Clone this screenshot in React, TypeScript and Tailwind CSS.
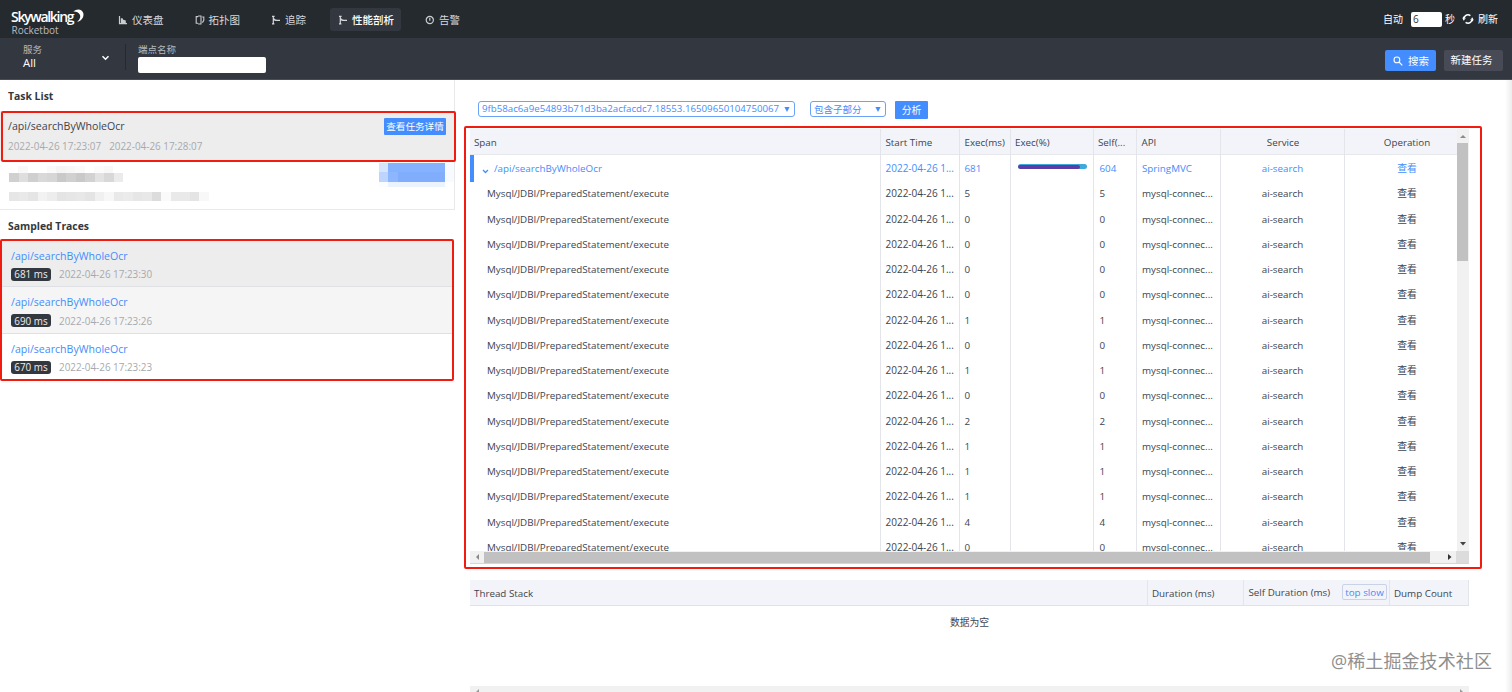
import React from "react";

const Crescent = () => (
  <svg className="absolute left-[61px] top-[-1px] h-[17px] w-[14px]" viewBox="0 0 14 18">
    <path d="M1 2.6C4.6 -0.8 10.6 -0.2 11.6 4.6C12.4 9 9.4 12.6 5 13.6C8 11.2 9 8.4 7.8 5.8C6.6 3.2 4 2.4 1 2.6Z" fill="#fff" />
  </svg>
);

const ChartIcon = () => (
  <svg className="h-[10px] w-[10px]" viewBox="0 0 10 10">
    <path d="M1.5 1V8.6H9" fill="none" stroke="#c9ccd0" strokeWidth="1.2" />
    <path d="M2.8 8V3.2H4.6L5.2 4.8L7.8 5.4V8Z" fill="#c9ccd0" />
  </svg>
);
const TopoIcon = () => (
  <svg className="h-[10px] w-[10px]" viewBox="0 0 10 10" fill="none" stroke="#c9ccd0" strokeWidth="1.1">
    <path d="M3.2 1.6H1.2V8.2H3.2M3.2 1H6V9H3.2" />
    <path d="M7.2 2H8.8V5.4L7.4 7.6" />
  </svg>
);
const BranchIcon = () => (
  <svg className="h-[10px] w-[10px]" viewBox="0 0 10 10" fill="none" stroke="#d4d6da" strokeWidth="1.2">
    <path d="M1 1.3H3.6M2.3 1.3V9M1 8.9H3.4M2.4 3.2C3 5 4.4 5.4 6 5.4M6 5.4H9" />
  </svg>
);
const AlarmIcon = () => (
  <svg className="h-[10px] w-[10px]" viewBox="0 0 10 10" fill="none" stroke="#c9ccd0" strokeWidth="1.2">
    <circle cx="4.8" cy="5" r="3.6" />
    <path d="M4.8 2.8V5.8" />
  </svg>
);
const RefreshIcon = () => (
  <svg className="h-[12px] w-[12px]" viewBox="0 0 12 12">
    <path d="M2 7.2A4.1 4.1 0 0 1 8.4 2.7M10 4.8A4.1 4.1 0 0 1 3.6 9.3" fill="none" stroke="#fff" strokeWidth="1.5" />
    <path d="M0 5.6H4L2 3.2ZM8 6.4H12L10 8.8Z" fill="#fff" />
  </svg>
);
const SearchIcon = () => (
  <svg className="h-[10px] w-[10px]" viewBox="0 0 10 10" fill="none" stroke="#fff" strokeWidth="1.1">
    <circle cx="3.9" cy="3.9" r="2.9" />
    <path d="M6 6L9.3 9.3" />
  </svg>
);
const Chevron = ({ className }: { className: string }) => (
  <svg className={className} viewBox="0 0 8 6" fill="none" stroke="currentColor" strokeWidth="1.5">
    <path d="M1 1.2L4 4.2L7 1.2" />
  </svg>
);

const nav = [
  { label: "仪表盘", icon: <ChartIcon />, cls: "w-[76.5px]" },
  { label: "拓扑图", icon: <TopoIcon />, cls: "w-[76.5px]" },
  { label: "追踪", icon: <BranchIcon />, cls: "w-[68px]" },
  { label: "性能剖析", icon: <BranchIcon />, cls: "w-[71px] ml-[-9px] mr-[24px] bg-[#333840] pl-[8px] text-white font-medium" },
  { label: "告警", icon: <AlarmIcon />, cls: "w-[60px]" },
];

const Header = () => (
  <header className="flex h-[38px] items-center bg-[#252a2f] text-[10.5px] text-[#d5d7da]">
    <div className="relative ml-[11px] mt-[10px] h-[28px] w-[107px]">
      <div className="h-[14px] text-[14px] leading-[14px] font-semibold tracking-[-1.3px] text-white">Skywalking</div>
      <Crescent />
      <div className="mt-[-1px] ml-[0.5px] text-[10px] leading-[14px] text-[#b9bcc0]">Rocketbot</div>
    </div>
    <nav className="mt-[1px] flex items-center">
      {nav.map((n, i) => (
        <a key={i} className={`flex h-[23px] items-center gap-[4px] rounded-[3px] whitespace-nowrap ${n.cls}`}>
          {n.icon}
          <span className="mt-[2px]">{n.label}</span>
        </a>
      ))}
    </nav>
    <div className="ml-auto mr-[14px] flex items-center whitespace-nowrap text-[10px] text-white">
      <span className="w-[28px] pt-[1px]">自动</span>
      <span className="flex h-[15px] w-[31px] items-center rounded-[2px] bg-white pl-[2px] text-[10px] text-[#333]">6</span>
      <span className="ml-[3px] w-[17px]">秒</span>
      <RefreshIcon />
      <span className="ml-[4px] pt-[1px]">刷新</span>
    </div>
  </header>
);

const Toolbar = () => (
  <div className="flex h-[42px] border-b border-[#4a4e54] bg-[#333840] text-[10px] text-[#b5b8bd]">
    <div className="mt-[6px] flex h-[26px] w-[126px] border-r border-[#252a2f] pl-[23px]">
      <div className="w-[78px]">
        <div className="h-[12px] text-[9.5px] leading-[12px]">服务</div>
        <div className="text-[11.3px] leading-[13px] text-white">All</div>
      </div>
      <Chevron className="mt-[11px] h-[6px] w-[9px] text-white" />
    </div>
    <div className="ml-[12px] mt-[5px]">
      <div className="h-[14px] text-[9.5px] leading-[14px]">端点名称</div>
      <div className="h-[16px] w-[128px] rounded-[2px] bg-white" />
    </div>
    <div className="ml-auto mr-[9px] mt-[12px] flex h-[21px] gap-[8px] whitespace-nowrap text-[10.5px] text-white">
      <button className="flex w-[51px] items-center rounded-[2px] bg-[#448dfe] pl-[8px]">
        <SearchIcon />
        <span className="ml-[5px] pt-[2px]">搜索</span>
      </button>
      <button className="w-[59px] rounded-[2px] bg-[#484b55] pt-[1px] pr-[4px] text-center">新建任务</button>
    </div>
  </div>
);

const traces = [
  { ms: "681 ms", t: "2022-04-26 17:23:30", bg: "bg-[#ededed]" },
  { ms: "690 ms", t: "2022-04-26 17:23:26", bg: "bg-[#f5f5f5]" },
  { ms: "670 ms", t: "2022-04-26 17:23:23", bg: "bg-white" },
];

const Mosaic = ({ cells, className }: { cells: string[]; className: string }) => (
  <div className={`flex ${className}`}>
    {cells.map((c, i) => (
      <div key={i} className={`h-full w-[9.5px] ${c}`} />
    ))}
  </div>
);

const LeftPanel = () => (
  <aside className="w-[455px] shrink-0">
    <div className="relative h-[129.5px] border-r border-b border-[#e9e9ec]">
      <h2 className="h-[31px] pl-[8px] text-[10.4px] leading-[32px] font-bold text-[#333840]">Task List</h2>
      <div className="flex h-[50px] justify-between bg-[#ededed] pl-[8px] pr-[8px]">
        <div>
          <div className="mt-[7px] text-[10.6px] leading-[16px] text-[#3d444f]">/api/searchByWholeOcr</div>
          <div className="mt-[5px] flex gap-[8px] text-[9.9px] leading-[15px] text-[#a7a9ae]">
            <span>2022-04-26 17:23:07</span>
            <span>2022-04-26 17:28:07</span>
          </div>
        </div>
        <span className="mt-[7px] flex h-[17px] w-[62px] items-center justify-center rounded-[1px] bg-[#448dfe] pt-[2px] text-[9.6px] whitespace-nowrap text-white">查看任务详情</span>
      </div>
      <div className="flex h-[47px] justify-between pl-[9px]">
        <div>
          <Mosaic className="mt-[5px] h-[7px] pl-[9px]" cells={["bg-[#f8f8f8]", "bg-white", "bg-white", "bg-[#fafafa]", "bg-[#f5f5f5]", "bg-[#f7f7f7]", "bg-[#fafafa]", "bg-white", "bg-[#fbfbfb]", "bg-[#f8f8f8]"]} />
          <Mosaic className="h-[9px]" cells={["bg-[#d0d0d0]", "bg-[#dedede]", "bg-[#cfcfcf]", "bg-[#d9d9d9]", "bg-[#d6d6d6]", "bg-[#c9c9c9]", "bg-[#d0d0d0]", "bg-[#c9c9c9]", "bg-[#d2d2d2]", "bg-[#e2e2e2]", "bg-[#d8d8d8]", "bg-[#ebebeb]"]} />
          <Mosaic className="mt-[10px] h-[9px]" cells={["bg-[#e6e6e6]", "bg-[#e9e9e9]", "bg-[#e5e5e5]", "bg-[#f2f2f2]", "bg-[#ededed]", "bg-[#e4e4e4]", "bg-[#e6e6e6]", "bg-[#e8e8e8]", "bg-[#e4e4e4]", "bg-[#f0f0f0]", "bg-[#f7f7f7]", "bg-[#e9e9e9]", "bg-[#ebebeb]", "bg-[#e6e6e6]", "bg-[#e8e8e8]", "bg-[#dcdcdc]", "bg-[#fafafa]", "bg-[#e9e9e9]", "bg-[#e9e9e9]", "bg-[#e4e4e4]", "bg-[#f8f8f8]"]} />
        </div>
        <div className="mt-[2px] flex h-[24px] w-[75px]">
          <div className="w-[9px]"><div className="h-[9px] bg-[#d5e5fd]" /><div className="h-[10px] bg-[#bdd5fd]" /><div className="h-[5px] bg-[#fafcff]" /></div>
          <div className="w-[57px]"><div className="h-[9px] bg-[#85b2fe]" /><div className="flex h-[10px] bg-[#80aefd]"><i className="w-[10px] bg-[#8cb6fe]" /></div><div className="h-[5px] bg-[#ebf3ff]" /></div>
          <div className="h-[19px] w-[9px] bg-[#f7faff]" />
        </div>
      </div>
      <div className="pointer-events-none absolute left-[1px] top-[30.5px] h-[51px] w-[455px] rounded-[2px] border-2 border-[#f01c10]" />
    </div>
    <div className="relative">
      <h2 className="h-[31px] pl-[8px] text-[10.4px] leading-[32px] font-bold text-[#333840]">Sampled Traces</h2>
      {traces.map((x, i) => (
        <div key={i} className={`h-[46.5px] w-[452px] pl-[11px] ${x.bg} ${i < 2 ? "border-b border-[#dfe0e3]" : ""}`}>
          <div className="pt-[7px] text-[10.6px] leading-[16px] text-[#448dfe]">/api/searchByWholeOcr</div>
          <div className="mt-[4px] flex items-center text-[9.9px] leading-[12px]">
            <span className="flex h-[13px] w-[40px] items-center justify-center rounded-[3px] bg-[#333840] whitespace-nowrap text-[#eee]">{x.ms}</span>
            <span className="ml-[8px] text-[#a7a9ae]">{x.t}</span>
          </div>
        </div>
      ))}
      <div className="pointer-events-none absolute left-0 top-[29px] h-[142px] w-[453.5px] rounded-[2px] border-2 border-[#f01c10]" />
    </div>
  </aside>
);

const cols = "grid grid-cols-[410.5px_79.5px_50.5px_83.5px_42.5px_84px_124px_112px]";
const execs = [5, 0, 0, 0, 0, 1, 0, 1, 0, 2, 1, 1, 1, 4, 0];
const cell = "border-r border-[#e3e5ea] whitespace-nowrap overflow-hidden";

const SpanTable = () => (
  <div className="relative ml-[15px] mt-[8px] w-[999px]">
    <div className="flex h-[422px] overflow-hidden">
      <div className="w-[986.5px] shrink-0">
        <div className={`${cols} h-[26px] border-b border-[#e6e8ec] bg-[#f3f4f9] leading-[27px] text-[#3d444f]`}>
          <div className={`${cell} pl-[4px]`}>Span</div>
          <div className={`${cell} pl-[5px]`}>Start Time</div>
          <div className={`${cell} pl-[4.5px]`}>Exec(ms)</div>
          <div className={`${cell} pl-[4.5px]`}>Exec(%)</div>
          <div className={`${cell} pl-[4px]`}>Self(...</div>
          <div className={`${cell} pl-[5px]`}>API</div>
          <div className={`${cell} pl-[2px] text-center`}>Service</div>
          <div className="pl-[13px] text-center">Operation</div>
        </div>
        <div className={`${cols} h-[25.25px] leading-[27px] text-[#448dfe]`}>
          <div className={`${cell} flex items-center`}>
            <div className="h-full w-[4px] bg-[#448dfe]" />
            <Chevron className="ml-[8px] mt-[5px] h-[5px] w-[7px]" />
            <span className="ml-[5px] leading-[27px]">/api/searchByWholeOcr</span>
          </div>
          <div className={`${cell} pl-[5px] text-[10px]`}>2022-04-26 1...</div>
          <div className={`${cell} pl-[4.5px]`}>681</div>
          <div className={`${cell} pl-[7px] pt-[9px]`}>
            <div className="flex h-[5px] w-[69.5px] items-center overflow-hidden rounded-full bg-[#40a9dc]">
              <div className="h-[4px] w-[62px] rounded-full bg-[#5a3da5]" />
            </div>
          </div>
          <div className={`${cell} pl-[5.5px]`}>604</div>
          <div className={`${cell} pl-[5.5px]`}>SpringMVC</div>
          <div className={`${cell} pl-[1px] text-center`}>ai-search</div>
          <div className="pl-[13px] text-center">查看</div>
        </div>
        {execs.map((v, i) => (
          <div key={i} className={`${cols} h-[25.25px] leading-[27.5px] text-[#3d444f]`}>
            <div className={`${cell} pl-[17px]`}>Mysql/JDBI/PreparedStatement/execute</div>
            <div className={`${cell} pl-[5px] text-[10px]`}>2022-04-26 1...</div>
            <div className={`${cell} pl-[4.5px]`}>{v}</div>
            <div className={cell} />
            <div className={`${cell} pl-[5.5px]`}>{v}</div>
            <div className={`${cell} pl-[5.5px]`}>mysql-connec...</div>
            <div className={`${cell} pl-[1px] text-center`}>ai-search</div>
            <div className="pl-[13px] text-center">查看</div>
          </div>
        ))}
      </div>
      <div className="flex w-[12.5px] flex-col items-center bg-[#f1f1f1]">
        <svg className="mt-[5px] h-[4px] w-[6px]" viewBox="0 0 6 4"><path d="M0 4L3 1L6 4Z" fill="#8a8a8a" /></svg>
        <div className="mt-[5px] h-[118px] w-[11px] bg-[#c1c1c1]" />
        <svg className="mt-auto mb-[5px] h-[4px] w-[6px]" viewBox="0 0 6 4"><path d="M0 0L3 3.5L6 0Z" fill="#444" /></svg>
      </div>
    </div>
    <div className="flex h-[13px] items-center border-b border-[#d5d6da] bg-[#f1f1f1]">
      <svg className="ml-[5px] mr-[5px] h-[6px] w-[4px]" viewBox="0 0 4 6"><path d="M4 0L1 3L4 6Z" fill="#8a8a8a" /></svg>
      <div className="h-[11px] w-[946px] bg-[#c1c1c1]" />
      <svg className="ml-[18px] h-[6px] w-[4px]" viewBox="0 0 4 6"><path d="M0 0L3.5 3L0 6Z" fill="#333" /></svg>
      <div className="ml-auto h-full w-[13px] bg-[#dcdcdc]" />
    </div>
    <div className="pointer-events-none absolute left-[-6px] top-[-3.5px] h-[443px] w-[1017.5px] rounded-[2px] border-2 border-[#f01c10]" />
  </div>
);

const select = "flex h-[16px] items-center justify-between rounded-[3px] border border-[#6ba3f7] pl-[3px] pr-[4px] text-[#448dfe] whitespace-nowrap";
const Caret = () => (
  <svg className="h-[5px] w-[6px]" viewBox="0 0 6 5"><path d="M0.4 0H5.6L3 5Z" fill="#448dfe" /></svg>
);

const RightPanel = () => (
  <main className="flex min-w-0 flex-1 flex-col text-[9.8px]">
    <div className="ml-[23px] mt-[21px] flex h-[21px] items-start">
      <div className={`${select} w-[317px]`}>
        <span className="pt-[1.5px] text-[9.7px]">9fb58ac6a9e54893b71d3ba2acfacdc7.18553.16509650104750067</span>
        <Caret />
      </div>
      <div className={`${select} ml-[15px] w-[76px]`}>
        <span className="pt-[2px] text-[9.5px]">包含子部分</span>
        <Caret />
      </div>
      <button className="ml-[9px] h-[17.5px] w-[33px] rounded-[1px] bg-[#448dfe] pt-[3px] text-center text-white">分析</button>
    </div>
    <SpanTable />
    <div className="ml-[15px] mt-[16px] w-[999px]">
      <div className="grid h-[26px] grid-cols-[677.5px_96.5px_146px_79px] border-b border-[#e0e2e6] bg-[#f3f4f9] leading-[28px] text-[#3d444f]">
        <div className={`${cell} pl-[4px]`}>Thread Stack</div>
        <div className={`${cell} pl-[4.5px]`}>Duration (ms)</div>
        <div className={`${cell} flex items-center justify-between pl-[4.5px] pr-[2px]`}>
          <span>Self Duration (ms)</span>
          <span className="mb-[1px] flex h-[16px] w-[45px] items-center justify-center rounded-[2px] border border-[#c9d3e6] pt-[2px] text-[#448dfe]">top slow</span>
        </div>
        <div className={`${cell} pl-[4px]`}>Dump Count</div>
      </div>
      <div className="h-[80px] pt-[10px] text-center text-[#3d444f]">数据为空</div>
      <div className="flex h-[6px] items-end justify-between bg-[#f1f1f1] pl-[5px] pr-[5px]">
        <svg className="h-[3px] w-[4px]" viewBox="0 0 4 3"><path d="M4 0L1 3H4Z" fill="#999" /></svg>
        <svg className="h-[3px] w-[4px]" viewBox="0 0 4 3"><path d="M0 0L3 3H0Z" fill="#999" /></svg>
      </div>
    </div>
  </main>
);

export default function App() {
  return (
    <div className="relative flex h-[692px] w-[1512px] flex-col overflow-hidden bg-white font-['Open_Sans','Noto_Sans_CJK_SC',sans-serif]">
      <Header />
      <Toolbar />
      <div className="flex min-h-0 flex-1">
        <LeftPanel />
        <RightPanel />
        <div className="w-[7px] shrink-0 bg-linear-to-r from-white to-[#ececec]" />
      </div>
      <div className="absolute right-[20px] bottom-[18px] text-[18px] leading-[26px] tracking-[0.1px] whitespace-nowrap text-[#8f8f8f]">@稀土掘金技术社区</div>
    </div>
  );
}
